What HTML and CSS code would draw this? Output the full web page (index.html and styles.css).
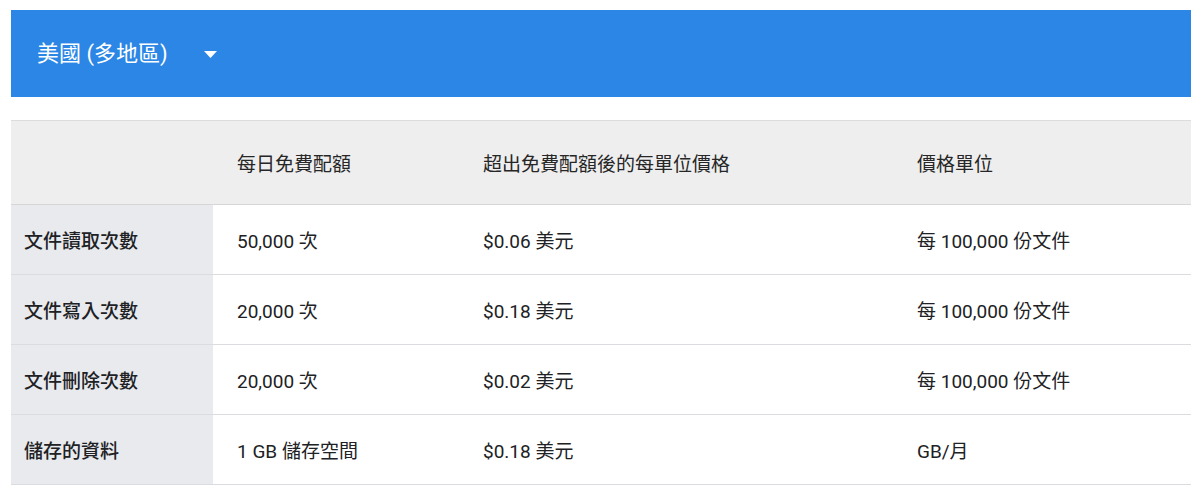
FILE: index.html
```html
<!DOCTYPE html>
<html lang="zh-Hant">
<head>
<meta charset="utf-8">
<title>美國 (多地區)</title>
<link rel="stylesheet" href="styles.css">
</head>
<body>
<div class="page">
  <div class="region-bar">
    <span class="region-title">美國 (多地區)</span>
    <svg class="caret" width="13" height="7" viewBox="0 0 13 7" aria-hidden="true"><path d="M0 0 H13 L6.5 7 Z" fill="#fff"/></svg>
  </div>
  <table class="price-table">
    <colgroup>
      <col class="c1"><col class="c2"><col class="c3"><col class="c4">
    </colgroup>
    <thead>
      <tr>
        <th class="blank"></th>
        <th>每日免費配額</th>
        <th>超出免費配額後的每單位價格</th>
        <th>價格單位</th>
      </tr>
    </thead>
    <tbody>
      <tr>
        <td class="label">文件讀取次數</td>
        <td>50,000 次</td>
        <td>$0.06 美元</td>
        <td>每 100,000 份文件</td>
      </tr>
      <tr>
        <td class="label">文件寫入次數</td>
        <td>20,000 次</td>
        <td>$0.18 美元</td>
        <td>每 100,000 份文件</td>
      </tr>
      <tr>
        <td class="label">文件刪除次數</td>
        <td>20,000 次</td>
        <td>$0.02 美元</td>
        <td>每 100,000 份文件</td>
      </tr>
      <tr>
        <td class="label">儲存的資料</td>
        <td>1 GB 儲存空間</td>
        <td>$0.18 美元</td>
        <td>GB/月</td>
      </tr>
    </tbody>
  </table>
</div>
</body>
</html>
```

FILE: styles.css
```css
html, body {
  margin: 0;
  padding: 0;
  background: #ffffff;
}

body {
  font-family: Roboto, "Noto Sans CJK TC", "Noto Sans", sans-serif;
  color: #202124;
}

.page {
  padding: 10px 9px 0 11px;
}

.region-bar {
  height: 87px;
  background: #2b86e5;
  display: flex;
  align-items: center;
  padding-left: 26px;
  gap: 36px;
  box-sizing: border-box;
}

.region-title {
  color: #ffffff;
  font-size: 22px;
  line-height: 1;
}

.caret {
  display: block;
  margin-top: 1px;
}

.price-table {
  margin-top: 23px;
  width: 1180px;
  border-collapse: collapse;
  table-layout: fixed;
  font-size: 19px;
}

.c1 { width: 202px; }
.c2 { width: 246px; }
.c3 { width: 434px; }
.c4 { width: 298px; }

.price-table th {
  background: #eeeeee;
  font-weight: 400;
  text-align: left;
  height: 83px;
  padding: 0 0 0 24px;
  border-top: 1px solid #dcdcdc;
  border-bottom: 1px solid #d6d6d6;
  color: #262626;
}

.price-table td {
  height: 69px;
  padding: 0 0 0 24px;
  border-bottom: 1px solid #dadce0;
  background: #ffffff;
}

.price-table td.label {
  background: #e8eaed;
  font-weight: 500;
  padding-left: 13px;
}
```
